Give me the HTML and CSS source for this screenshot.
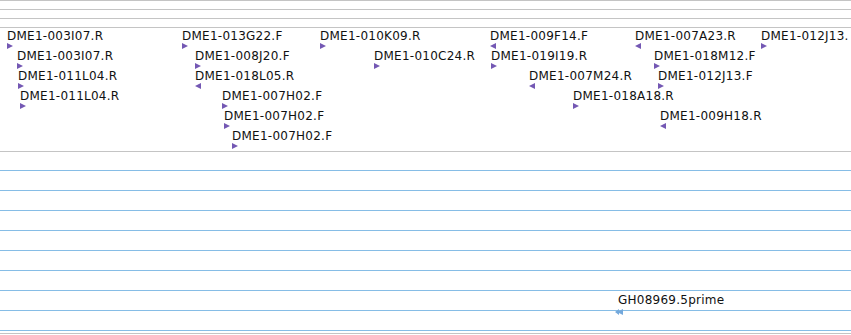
FILE: index.html
```html
<!DOCTYPE html>
<html>

<head>
    <meta charset="UTF-8">
    <title>Track view</title>
    <link rel="stylesheet" href="styles.css">
</head>

<body>
    <div class="view">
        <!-- ruler lines -->
        <div class="ruler">
            <div class="tick"></div>
            <div class="tick"></div>
            <div class="tick"></div>
            <div class="tick last"></div>
        </div>

        <!-- feature track -->
        <div class="track" id="feature-track"></div>

        <!-- expression rows -->
        <div class="lanes" id="lanes">
            <div class="lane first"></div>
            <div class="lane"></div>
            <div class="lane"></div>
            <div class="lane"></div>
            <div class="lane"></div>
            <div class="lane"></div>
            <div class="lane"></div>
            <div class="lane"></div>
            <div class="lane"></div>
            <div class="lane end"></div>

            <div class="feat est" style="left: 618px; top: 141px;">
                <div class="label">GH08969.5prime</div>
                <svg class="arrow" width="9" height="6" viewBox="0 0 9 6">
                    <polygon points="0,3 4,0 4,2 8,0 8,6 4,4 4,6" />
                </svg>
            </div>
        </div>
    </div>

    <script>
        // Features: [x, row, name, strand]
        const features = [
            [7, 1, "DME1-003I07.R", "+"],
            [182, 1, "DME1-013G22.F", "+"],
            [320, 1, "DME1-010K09.R", "+"],
            [490, 1, "DME1-009F14.F", "-"],
            [635, 1, "DME1-007A23.R", "-"],
            [761, 1, "DME1-012J13.", "+"],
            [17, 2, "DME1-003I07.R", "+"],
            [195, 2, "DME1-008J20.F", "+"],
            [374, 2, "DME1-010C24.R", "+"],
            [491, 2, "DME1-019I19.R", "+"],
            [654, 2, "DME1-018M12.F", "+"],
            [18, 3, "DME1-011L04.R", "+"],
            [195, 3, "DME1-018L05.R", "-"],
            [529, 3, "DME1-007M24.R", "-"],
            [658, 3, "DME1-012J13.F", "+"],
            [20, 4, "DME1-011L04.R", "+"],
            [222, 4, "DME1-007H02.F", "+"],
            [573, 4, "DME1-018A18.R", "+"],
            [224, 5, "DME1-007H02.F", "+"],
            [660, 5, "DME1-009H18.R", "-"],
            [232, 6, "DME1-007H02.F", "+"]
        ];

        const track = document.getElementById("feature-track");

        features.forEach(([x, row, name, strand]) => {
            const feat = document.createElement("div");
            feat.className = "feat";
            feat.style.left = x + "px";
            feat.style.top = ((row - 1) * 20 + 1) + "px";

            const points = strand === "+" ? "0,0 6,3 0,6" : "6,0 0,3 6,6";
            feat.innerHTML = `
                <div class="label">${name}</div>
                <svg class="arrow" width="6" height="6" viewBox="0 0 6 6">
                    <polygon points="${points}" />
                </svg>
            `;
            track.appendChild(feat);
        });
    </script>
</body>

</html>
```

FILE: styles.css
```css
/* Reset styles */
* {
    margin: 0;
    padding: 0;
    box-sizing: border-box;
}

body {
    font-family: "DejaVu Sans", Verdana, sans-serif;
    background-color: #fff;
    overflow: hidden;
}

.view {
    width: 851px;
    height: 335px;
    overflow: hidden;
}

/* Ruler lines at the top */
.tick {
    height: 9px;
    border-top: 1px solid #c4c4c4;
}

.tick.last {
    height: 1px;
}

/* Feature track */
.track {
    position: relative;
    height: 124px;
    border-bottom: 1px solid #c4c4c4;
}

.feat {
    position: absolute;
    display: flex;
    flex-direction: column;
    align-items: flex-start;
}

.label {
    font-size: 12px;
    line-height: 14px;
    letter-spacing: 0.25px;
    color: #111;
    white-space: nowrap;
}

.arrow {
    display: block;
    fill: #7458b4;
}

/* Lanes below */
.lanes {
    position: relative;
}

.lane {
    height: 20px;
    border-bottom: 1px solid #86bde6;
}

.lane.first {
    height: 19px;
}

.lane.end {
    height: 3px;
    border-bottom: 1px solid #c4c4c4;
}

.feat.est .arrow {
    fill: #74a9dc;
    margin-left: -3px;
    margin-top: 2px;
}
```
